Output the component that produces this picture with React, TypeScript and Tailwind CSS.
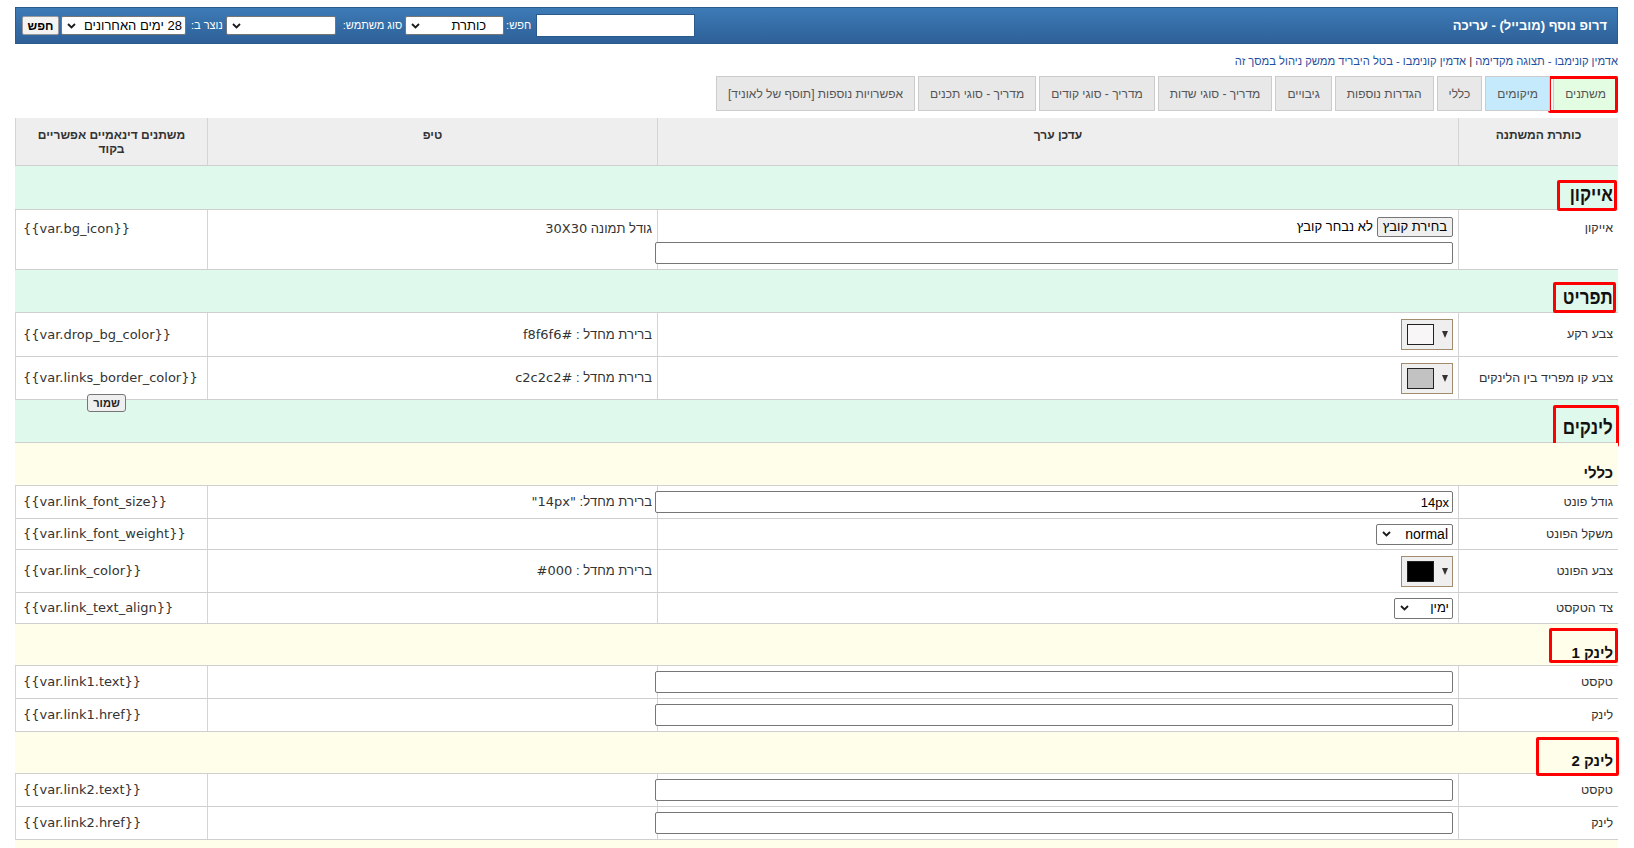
import type { ReactNode } from "react";

const code = "font-['DejaVu_Sans',sans-serif]";

function Chevron() {
  return (
    <svg width="9" height="6" viewBox="0 0 9 6" className="shrink-0">
      <path d="M1 1l3.5 3.5L8 1" fill="none" stroke="#1a1a1a" strokeWidth="1.8" />
    </svg>
  );
}

function FakeSelect({ text, className }: { text: string; className: string }) {
  return (
    <div className={`flex items-center justify-between rounded-[2px] border border-[#767676] bg-white pl-[5px] text-[13px] text-black ${className}`}>
      <span>{text}</span>
      <Chevron />
    </div>
  );
}

function TextBox({ value = "" }: { value?: string }) {
  return (
    <input
      readOnly
      value={value}
      className="h-[22px] w-[798px] shrink-0 rounded-[2px] border border-[#767676] bg-white px-[3px] text-[13px] text-black"
    />
  );
}

function ColorPick({ swatch }: { swatch: string }) {
  return (
    <div dir="ltr" className="flex h-[31px] w-[52px] items-center justify-between border border-[#a38b6d] bg-[#efefef] pl-[5px] pr-[4px]">
      <div className={`h-[21px] w-[27px] border-[1.5px] border-[#222] ${swatch}`} />
      <svg width="6" height="7" viewBox="0 0 6 7">
        <polygon points="0,0 6,0 3,7" fill="#333" />
      </svg>
    </div>
  );
}

function Mark({ className }: { className: string }) {
  return <span className={`pointer-events-none absolute rounded-[2px] border-[3px] border-[#ff0000] ${className}`} />;
}

function Latin({ children }: { children: ReactNode }) {
  return <span className={code}>{children}</span>;
}

function TopBar() {
  return (
    <div dir="rtl" className="flex h-[37px] items-center justify-between border border-[#2c5b8e] bg-linear-to-b from-[#3d7bb7] to-[#2e6097] pl-[6px] pr-[10px]">
      <h1 className="text-[13px] font-bold text-white">דרופ נוסף (מובייל) - עריכה</h1>
      <div className="flex items-center text-[11px] text-white">
        <div className="h-[23px] w-[159px] border border-[#2a5a8c] bg-white" />
        <span className="mr-[5px]">חפש:</span>
        <FakeSelect text="כותרת" className="mr-[2px] h-[19px] w-[99px] pr-[17px]" />
        <span className="mr-[3px]">סוג משתמש:</span>
        <FakeSelect text="" className="mr-[7px] h-[19px] w-[110px] pr-[4px]" />
        <span className="mr-[3px]">נוצר ב:</span>
        <FakeSelect text="28 ימים האחרונים" className="mr-[5px] h-[19px] w-[125px] pr-[3px]" />
        <button className="mr-[2px] flex h-[19px] w-[37px] items-center justify-center rounded-[2px] border border-[#9a9a9a] bg-[#f3f3f3] text-[12px] font-bold text-black">
          חפש
        </button>
      </div>
    </div>
  );
}

function Breadcrumb() {
  return (
    <div dir="rtl" className="mt-[9px] h-[16px] text-[11.2px] leading-[16px] text-[#222]">
      <a className="text-[#1f4f9e]">אדמין קונימבו - תצוגה מקדימה</a> | <a className="text-[#1f4f9e]">אדמין קונימבו - בטל היבריד ממשק ניהול במסך זה</a>
    </div>
  );
}

const tabs = [
  { label: "משתנים", bg: "bg-[#e2fde2]", marked: true },
  { label: "מיקומים", bg: "bg-[#c5eafc]" },
  { label: "כללי", bg: "bg-[#e8e8e8]" },
  { label: "הגדרות נוספות", bg: "bg-[#e8e8e8]" },
  { label: "גיבויים", bg: "bg-[#e8e8e8]" },
  { label: "מדריך - סוגי שדות", bg: "bg-[#e8e8e8]" },
  { label: "מדריך - סוגי קודים", bg: "bg-[#e8e8e8]" },
  { label: "מדריך - סוגי תכנים", bg: "bg-[#e8e8e8]" },
  { label: "אפשרויות נוספות [תוסף של לאוניד]", bg: "bg-[#e8e8e8]" },
];

function Tabs() {
  return (
    <div dir="rtl" className="mt-[7px] flex h-[35px] gap-[3px]">
      {tabs.map((t) => (
        <div key={t.label} className={`relative flex items-center border border-[#cccccc] px-[11px] text-[12px] text-[#555] ${t.bg}`}>
          {t.label}
          {t.marked && <Mark className="-top-[1px] -right-[1px] -bottom-[3px] -left-[6px]" />}
        </div>
      ))}
    </div>
  );
}

const cols = "grid grid-cols-[160px_801px_450px_192px]";
const cellLine = "border-l border-[#d4d4d4]";

function HeaderRow() {
  const th = `${cellLine} pt-[10px] text-center text-[12px] font-bold leading-[14px] text-[#333]`;
  return (
    <div className={`${cols} h-[48px] border-b border-[#cfcfcf] bg-[#eeeeee]`}>
      <div className={th}>כותרת המשתנה</div>
      <div className={th}>עדכן ערך</div>
      <div className={th}>טיפ</div>
      <div className={th}>
        משתנים דינאמיים אפשריים
        <br />
        בקוד
      </div>
    </div>
  );
}

function Section({ title, tone, h, big, mark }: { title?: string; tone: string; h: string; big?: boolean; mark?: string }) {
  return (
    <div className={`relative flex items-end border-b border-[#cfcfcf] pb-[4px] pr-[5px] ${tone} ${h}`}>
      {title && (
        <span
          className={
            big
              ? "inline-block origin-right scale-x-[0.85] text-[20px] font-bold leading-[21px] text-[#111]"
              : "text-[15px] font-bold leading-[17px] text-[#111]"
          }
        >
          {title}
        </span>
      )}
      {mark && <Mark className={mark} />}
    </div>
  );
}

function Field({
  label,
  editor,
  tip,
  codeText,
  h,
  top,
  save,
}: {
  label: string;
  editor?: ReactNode;
  tip?: ReactNode;
  codeText: string;
  h: string;
  top?: boolean;
  save?: boolean;
}) {
  const align = top ? "items-start pt-[9px]" : "items-center";
  return (
    <div className={`${cols} border-b border-[#cfcfcf] bg-white text-[13px] text-[#333] ${h}`}>
      <div className={`flex pr-[5px] text-[12.5px] ${cellLine} ${align}`}>{label}</div>
      <div className={`flex pr-[5px] ${cellLine} ${top ? "items-start pt-[7px]" : "items-center"}`}>{editor}</div>
      <div className={`flex pr-[5px] ${cellLine} ${align}`}>{tip}</div>
      <div dir="ltr" className={`relative flex pl-[7px] ${code} ${cellLine} ${align}`}>
        {codeText}
        {save && (
          <button className="absolute left-[71px] top-[37px] z-10 flex h-[18px] w-[39px] items-center justify-center rounded-[3px] border border-[#767676] bg-[#efefef] font-['Liberation_Sans',Arial,sans-serif] text-[11px] font-bold text-[#222]">
            שמור
          </button>
        )}
      </div>
    </div>
  );
}

const green = "bg-[#dffaec]";
const yellow = "bg-[#fffeeb]";

function VarsTable() {
  return (
    <div dir="rtl" className="mt-[7px]">
      <HeaderRow />
      <Section title="אייקון" tone={green} h="h-[44px]" big mark="top-[14px] right-[1px] w-[60px] h-[31px]" />
      <Field
        label="אייקון"
        h="h-[60px]"
        top
        editor={
          <div className="flex flex-col items-start gap-[5px]">
            <div className="flex items-center gap-[4px] text-black">
              <span className="flex h-[20px] items-center rounded-[2px] border border-[#767676] bg-[#efefef] px-[5px]">בחירת קובץ</span>
              <span>לא נבחר קובץ</span>
            </div>
            <TextBox />
          </div>
        }
        tip={
          <>
            גודל תמונה&nbsp;<Latin>30X30</Latin>
          </>
        }
        codeText="{{var.bg_icon}}"
      />
      <Section title="תפריט" tone={green} h="h-[43px]" big mark="top-[12px] right-[2px] w-[63px] h-[31px]" />
      <Field
        label="צבע רקע"
        h="h-[44px]"
        editor={<ColorPick swatch="bg-[#f8f6f6]" />}
        tip={
          <>
            ברירת מחדל :&nbsp;<Latin>#f8f6f6</Latin>
          </>
        }
        codeText="{{var.drop_bg_color}}"
      />
      <Field
        label="צבע קו מפריד בין הלינקים"
        h="h-[43px]"
        editor={<ColorPick swatch="bg-[#c2c2c2]" />}
        tip={
          <>
            ברירת מחדל :&nbsp;<Latin>#c2c2c2</Latin>
          </>
        }
        codeText="{{var.links_border_color}}"
        save
      />
      <Section title="לינקים" tone={green} h="h-[43px]" big mark="top-[5px] -right-[1px] w-[66px] h-[42px]" />
      <Section title="כללי" tone={yellow} h="h-[43px]" />
      <Field
        label="גודל פונט"
        h="h-[33px]"
        editor={<TextBox value="14px" />}
        tip={
          <>
            ברירת מחדל:&nbsp;<Latin>"14px"</Latin>
          </>
        }
        codeText="{{var.link_font_size}}"
      />
      <Field
        label="משקל הפונט"
        h="h-[31px]"
        editor={<FakeSelect text="normal" className="h-[21px] w-[77px] pr-[4px] text-[14px]" />}
        codeText="{{var.link_font_weight}}"
      />
      <Field
        label="צבע הפונט"
        h="h-[43px]"
        editor={<ColorPick swatch="bg-[#000000]" />}
        tip={
          <>
            ברירת מחדל :&nbsp;<Latin>#000</Latin>
          </>
        }
        codeText="{{var.link_color}}"
      />
      <Field
        label="צד הטקסט"
        h="h-[31px]"
        editor={<FakeSelect text="ימין" className="h-[21px] w-[59px] pr-[3px]" />}
        codeText="{{var.link_text_align}}"
      />
      <Section title="לינק 1" tone={yellow} h="h-[42px]" mark="top-[4px] right-[0px] w-[69px] h-[35px]" />
      <Field label="טקסט" h="h-[33px]" editor={<TextBox />} codeText="{{var.link1.text}}" />
      <Field label="לינק" h="h-[33px]" editor={<TextBox />} codeText="{{var.link1.href}}" />
      <Section title="לינק 2" tone={yellow} h="h-[42px]" mark="top-[5px] -right-[1px] w-[83px] h-[39px]" />
      <Field label="טקסט" h="h-[33px]" editor={<TextBox />} codeText="{{var.link2.text}}" />
      <Field label="לינק" h="h-[33px]" editor={<TextBox />} codeText="{{var.link2.href}}" />
      <Section tone={yellow} h="h-[42px]" />
    </div>
  );
}

export default function App() {
  return (
    <div className="min-h-[848px] bg-white pl-[15px] pr-[16px] pt-[7px] font-['Liberation_Sans',Arial,sans-serif] text-[13px] text-[#333]">
      <TopBar />
      <Breadcrumb />
      <Tabs />
      <VarsTable />
    </div>
  );
}
